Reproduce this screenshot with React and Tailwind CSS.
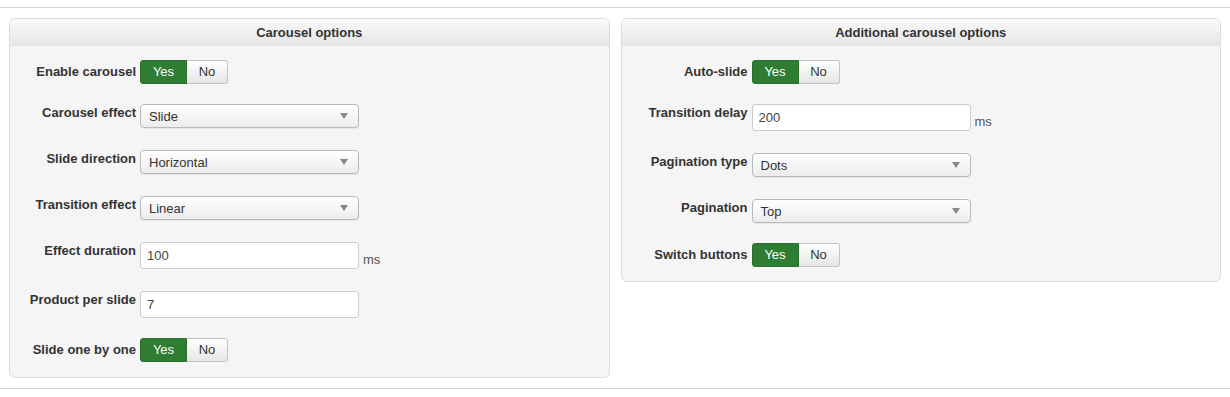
import React from "react";

const font = { fontFamily: '"Liberation Sans", Arial, sans-serif' };

function Toggle() {
  return (
    <div className="flex h-[24px] text-[13px]">
      <div className="w-[47px] flex items-center justify-center bg-[#2e7d32] text-white rounded-l-[3px] border border-[#2a6f2d]">
        Yes
      </div>
      <div className="w-[41px] flex items-center justify-center bg-gradient-to-b from-white to-[#e6e6e6] text-[#333] rounded-r-[3px] border border-l-0 border-[#c4c4c4]">
        No
      </div>
    </div>
  );
}

function Select({ value }) {
  return (
    <div className="w-[219px] h-[24px] rounded-[4px] border border-[#b9b9b9] bg-gradient-to-b from-white to-[#ececec] flex items-center justify-between pl-[8px] pr-[10px] text-[13px] text-[#333] shadow-[0_1px_1px_rgba(0,0,0,0.06)]">
      <span className="pt-[2px]">{value}</span>
      <svg width="8" height="6" viewBox="0 0 8 6">
        <path d="M0 0 L8 0 L4 6 Z" fill="#888" />
      </svg>
    </div>
  );
}

function Input({ value, ms }) {
  return (
    <div className="flex">
      <div className="w-[219px] h-[27px] rounded-[3px] border border-[#ccc] bg-white flex items-center pl-[6px] text-[13px] text-[#444]">
        <span className="pt-[1px]">{value}</span>
      </div>
      {ms && <span className="ml-[4px] mt-[8px] text-[13px] text-[#555]">ms</span>}
    </div>
  );
}

function Row({ label, h, toggle, children }) {
  return (
    <div className="flex items-start" style={{ height: h }}>
      <div
        className={`w-[126px] text-right text-[13px] font-bold text-[#333] leading-[17px] whitespace-nowrap ${
          toggle ? "pt-[3px]" : "pt-0"
        }`}
      >
        {label}
      </div>
      <div className="ml-[4px]">{children}</div>
    </div>
  );
}

function Panel({ title, children, height }) {
  return (
    <div
      className="flex-1 rounded-[6px] border border-[#dcdcdc] bg-[#f5f5f5] self-start overflow-hidden"
      style={{ height }}
    >
      <div className="h-[27px] bg-gradient-to-b from-[#fafafa] to-[#e5e5e5] text-center text-[13px] font-bold text-[#333] leading-[27px]">
        {title}
      </div>
      <div className="pt-[14px]">{children}</div>
    </div>
  );
}

export default function App() {
  return (
    <div className="w-[1230px] h-[397px] bg-white" style={font}>
      <div className="h-[7px]" />
      <div className="border-t border-b border-[#d4d4d4] pt-[10px] pb-[10px] px-[9px] flex gap-[11px] h-[382px]">
        <Panel title="Carousel options" height={360}>
          <Row label="Enable carousel" h={44} toggle>
            <Toggle />
          </Row>
          <Row label="Carousel effect" h={46}>
            <Select value="Slide" />
          </Row>
          <Row label="Slide direction" h={46}>
            <Select value="Horizontal" />
          </Row>
          <Row label="Transition effect" h={46}>
            <Select value="Linear" />
          </Row>
          <Row label="Effect duration" h={49}>
            <Input value="100" ms />
          </Row>
          <Row label="Product per slide" h={47}>
            <Input value="7" />
          </Row>
          <Row label="Slide one by one" h={24} toggle>
            <Toggle />
          </Row>
        </Panel>
        <Panel title="Additional carousel options" height={264}>
          <Row label="Auto-slide" h={44} toggle>
            <Toggle />
          </Row>
          <Row label="Transition delay" h={49}>
            <Input value="200" ms />
          </Row>
          <Row label="Pagination type" h={46}>
            <Select value="Dots" />
          </Row>
          <Row label="Pagination" h={44}>
            <Select value="Top" />
          </Row>
          <Row label="Switch buttons" h={24} toggle>
            <Toggle />
          </Row>
        </Panel>
      </div>
    </div>
  );
}
